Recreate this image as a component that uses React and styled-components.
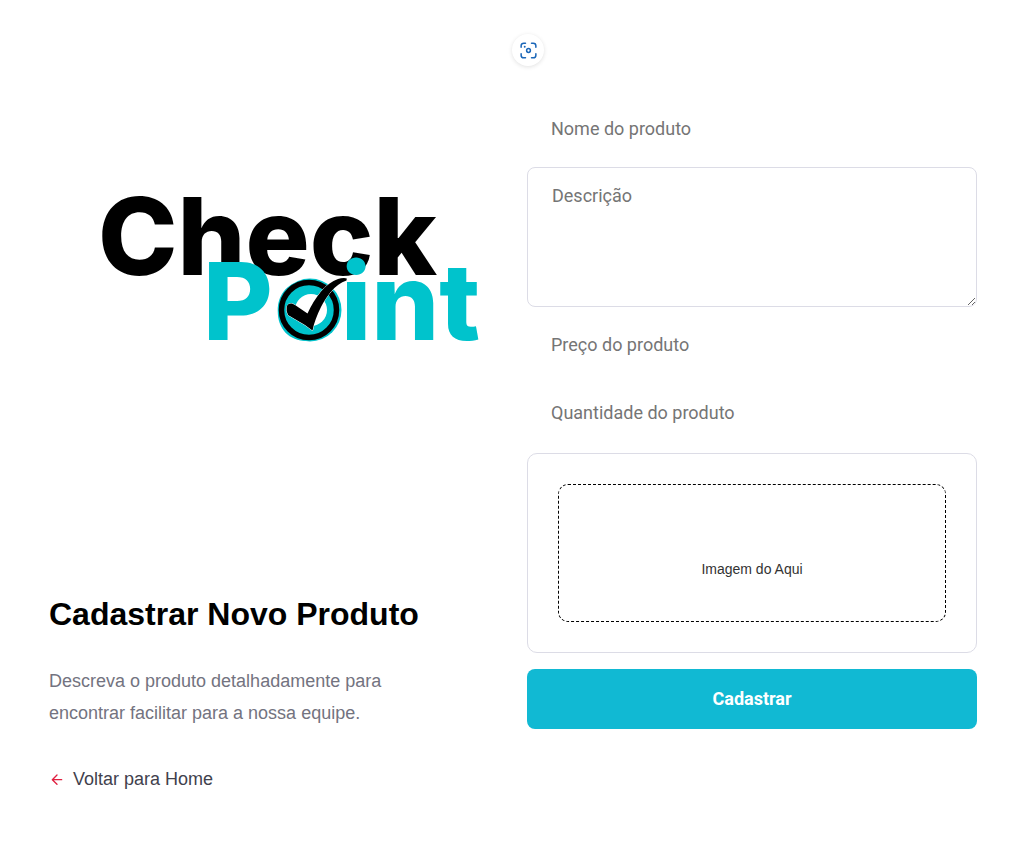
import React from "react";
import styled, { createGlobalStyle } from "styled-components";

const GlobalStyle = createGlobalStyle`
  * { box-sizing: border-box; margin: 0; padding: 0; }
  body {
    background: #fff;
    font-family: "Liberation Sans", Arial, sans-serif;
    -webkit-font-smoothing: antialiased;
  }
  input, textarea, button { font: 400 18px Roboto, sans-serif; }
`;

const Page = styled.main`
  display: grid;
  grid-template-columns: 73fr 75fr;
  column-gap: 40px;
  align-items: start;
  max-width: 1120px;
  margin: 0 auto;
  padding: 32px 42px 32px 49px;
`;

const Intro = styled.section`
  display: flex;
  flex-direction: column;
  align-items: flex-start;
`;

const Logo = styled.svg`
  display: block;
  width: 100%;
  height: auto;
  overflow: visible;
`;

const Wordmark = styled.text`
  font-family: Inter, sans-serif;
  font-weight: 800;
  font-size: 107px;
  fill: ${({ $color }) => $color};
`;

const Title = styled.h1`
  margin-top: 63px;
  font-size: 32px;
  line-height: 38px;
  color: #000;
`;

const Description = styled.p`
  max-width: 380px;
  margin-top: 32px;
  font-size: 18px;
  line-height: 32px;
  color: #737380;
`;

const BackLink = styled.a`
  display: flex;
  align-items: center;
  gap: 8px;
  margin-top: 38px;
  font-size: 18px;
  line-height: 24px;
  color: #41414d;
  text-decoration: none;
`;

const Form = styled.form`
  position: relative;
  display: flex;
  flex-direction: column;
  gap: 8px;
  margin-top: 67px;
`;

const ScanButton = styled.button`
  position: absolute;
  top: -65px;
  left: -15px;
  display: flex;
  align-items: center;
  justify-content: center;
  width: 32px;
  height: 32px;
  border: 0;
  border-radius: 50%;
  background: #fff;
  box-shadow: 0 1px 4px rgba(0, 0, 0, 0.12);
  cursor: pointer;
`;

const Field = styled.input`
  width: 100%;
  height: 60px;
  padding: 0 24px 2px;
  border: 0;
  border-radius: 8px;
  background: #fff;
  color: #333;
  &::placeholder { color: #757575; }
`;

const TextArea = styled.textarea`
  display: block;
  width: 100%;
  height: 140px;
  padding: 16px 24px;
  border: 1px solid #dcdce6;
  border-radius: 8px;
  line-height: 24px;
  color: #333;
  resize: vertical;
  &::placeholder { color: #757575; }
`;

const UploadCard = styled.div`
  height: 200px;
  margin: 2px 0 8px;
  padding: 30px;
  border: 1px solid #dcdce6;
  border-radius: 10px;
`;

const DropZone = styled.label`
  display: flex;
  align-items: center;
  justify-content: center;
  height: 100%;
  padding-top: 32px;
  border: 1px dashed #000;
  border-radius: 10px;
  font-size: 14px;
  color: #333;
  cursor: pointer;
`;

const FileInput = styled.input`
  display: none;
`;

const SubmitButton = styled.button`
  height: 60px;
  padding-bottom: 2px;
  border: 0;
  border-radius: 8px;
  background: #11b9d3;
  color: #fff;
  font-weight: 700;
  cursor: pointer;
`;

function CheckPointLogo() {
  return (
    <Logo viewBox="0 0 438 500" role="img" aria-label="Check Point">
      <Wordmark x="49" y="243" $color="#000">Check</Wordmark>
      <Wordmark y="308" $color="#00c3cc">
        <tspan x="154">P</tspan>
        <tspan x="225">o</tspan>
        <tspan x="292">int</tspan>
      </Wordmark>
      <circle cx="261" cy="278" r="31.5" fill="#00c3cc" />
      <circle cx="262" cy="278" r="16" fill="#fff" />
      <circle cx="260" cy="278" r="27.5" fill="none" stroke="#000" strokeWidth="5.5" />
      <path
        d="M237.700 274.500Q239 271 243 271.500L246 273L258.500 281.500C266 265 277 251 289 247C292 246 296 245.500 297.800 246.500L297.500 248.500C286 252 277 265 272 275C268 283 265 291 263.500 298.500L256 293L239 283Q237 279 237.700 274.500Z"
        fill="#000"
        stroke="#fff"
        strokeWidth="1"
        paintOrder="stroke"
      />
    </Logo>
  );
}

function ScanIcon() {
  return (
    <svg width="17" height="17" viewBox="0 0 18 18" fill="none" stroke="#1a66b8" strokeWidth="1.6" strokeLinecap="round" aria-hidden="true">
      <path d="M1.2 5.5V4a2.8 2.8 0 0 1 2.8-2.800h1.800M12.200 1.200H14A2.800 2.800 0 0 1 16.800 4v1.500M16.800 12.500V14a2.800 2.800 0 0 1-2.800 2.800h-1.800M5.800 16.800H4A2.800 2.800 0 0 1 1.200 14v-1.500" />
      <circle cx="9" cy="9" r="2" />
      <circle cx="5" cy="5" r="1" fill="#1a66b8" stroke="none" />
    </svg>
  );
}

function ArrowLeft() {
  return (
    <svg width="16" height="16" viewBox="0 0 24 24" fill="none" stroke="#e02041" strokeWidth="2" strokeLinecap="round" strokeLinejoin="round" aria-hidden="true">
      <path d="M19 13H5M12 20l-7-7 7-7" />
    </svg>
  );
}

export default function App() {
  return (
    <>
      <GlobalStyle />
      <Page>
        <Intro>
          <CheckPointLogo />
          <Title>Cadastrar Novo Produto</Title>
          <Description>
            Descreva o produto detalhadamente para encontrar facilitar para a nossa equipe.
          </Description>
          <BackLink href="#home">
            <ArrowLeft />
            Voltar para Home
          </BackLink>
        </Intro>
        <Form onSubmit={(event) => event.preventDefault()}>
          <ScanButton type="button" aria-label="Pesquisar imagem">
            <ScanIcon />
          </ScanButton>
          <Field aria-label="Nome do produto" placeholder="Nome do produto" />
          <TextArea aria-label="Descrição" placeholder="Descrição" />
          <Field aria-label="Preço do produto" placeholder="Preço do produto" />
          <Field aria-label="Quantidade do produto" placeholder="Quantidade do produto" />
          <UploadCard>
            <DropZone htmlFor="imagem">Imagem do Aqui</DropZone>
            <FileInput id="imagem" type="file" accept="image/*" />
          </UploadCard>
          <SubmitButton type="submit">Cadastrar</SubmitButton>
        </Form>
      </Page>
    </>
  );
}
